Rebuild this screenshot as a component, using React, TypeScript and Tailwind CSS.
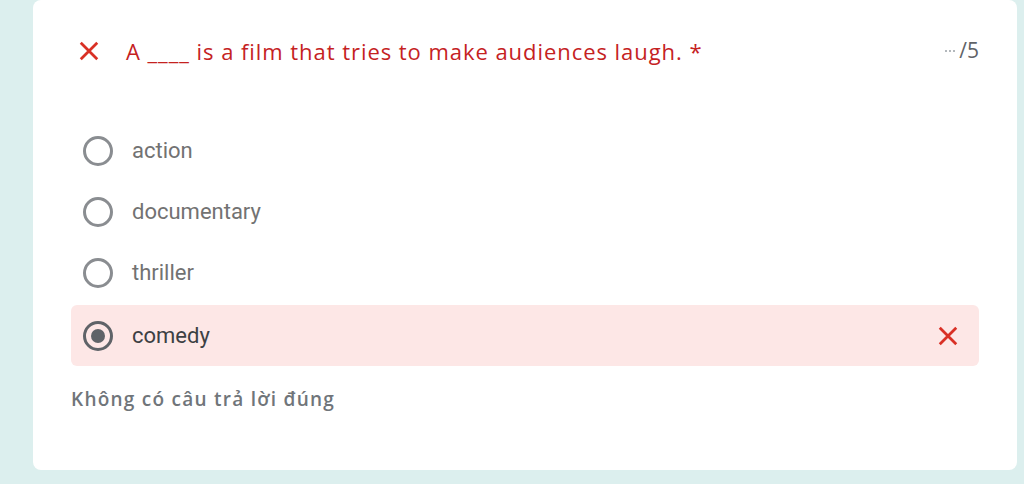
import React from "react";

const XIcon = ({ className }: { className?: string }) => (
  <svg viewBox="0 0 24 24" className={className} fill="none">
    <path d="M3 3 L21 21 M21 3 L3 21" stroke="#d93025" strokeWidth="3" strokeLinecap="butt" />
  </svg>
);

const Radio = ({ checked }: { checked?: boolean }) => (
  <div
    className={`w-[30px] h-[30px] rounded-full border-[3px] ${checked ? "border-[#5f6368]" : "border-[#8a8d91]"} flex items-center justify-center shrink-0`}
  >
    {checked && <div className="w-[14px] h-[14px] rounded-full bg-[#5f6368]" />}
  </div>
);

const Option = ({ label, checked, wrong }: { label: string; checked?: boolean; wrong?: boolean }) => (
  <div
    className={`h-[61px] flex items-center pl-[12px] pr-[20px] rounded-[6px] ${wrong ? "bg-[#fde7e6]" : ""}`}
  >
    <Radio checked={checked} />
    <span
      className={`ml-[19px] text-[22px] ${checked ? "text-[#3c4043]" : "text-[#727272]"} font-['Roboto',sans-serif] flex-1`}
    >
      {label}
    </span>
    {wrong && <XIcon className="w-[22px] h-[22px]" />}
  </div>
);

export default function App() {
  return (
    <div className="w-[1024px] h-[484px] bg-[#dcefee] overflow-hidden">
      <div className="ml-[33px] w-[984px] h-[470px] bg-white rounded-[8px] px-[38px] pt-[40px] flex flex-col">
        <div className="flex items-center h-[22px] pl-[7px]">
          <XIcon className="w-[22px] h-[22px]" />
          <span className="ml-[26px] text-[22px] text-[#c5221f] font-['Open_Sans',sans-serif] tracking-[0.95px] flex-1 whitespace-nowrap">
            A ____ is a film that tries to make audiences laugh. *
          </span>
          <span className="flex items-center gap-[2px]">
            <span className="w-[2px] h-[2px] rounded-full bg-[#9aa0a6]" />
            <span className="w-[2px] h-[2px] rounded-full bg-[#9aa0a6]" />
            <span className="w-[2px] h-[2px] rounded-full bg-[#9aa0a6]" />
            <span className="ml-[2px] text-[21px] text-[#5f6368] font-['Open_Sans',sans-serif]">/5</span>
          </span>
        </div>
        <div className="mt-[58px] flex flex-col">
          <Option label="action" />
          <Option label="documentary" />
          <Option label="thriller" />
          <div className="h-[2px]" />
          <Option label="comedy" checked wrong />
        </div>
        <div className="mt-[19px] text-[19px] font-semibold text-[#70757a] font-['Open_Sans',sans-serif] tracking-[1.25px]">
          Không có câu trả lời đúng
        </div>
      </div>
    </div>
  );
}
